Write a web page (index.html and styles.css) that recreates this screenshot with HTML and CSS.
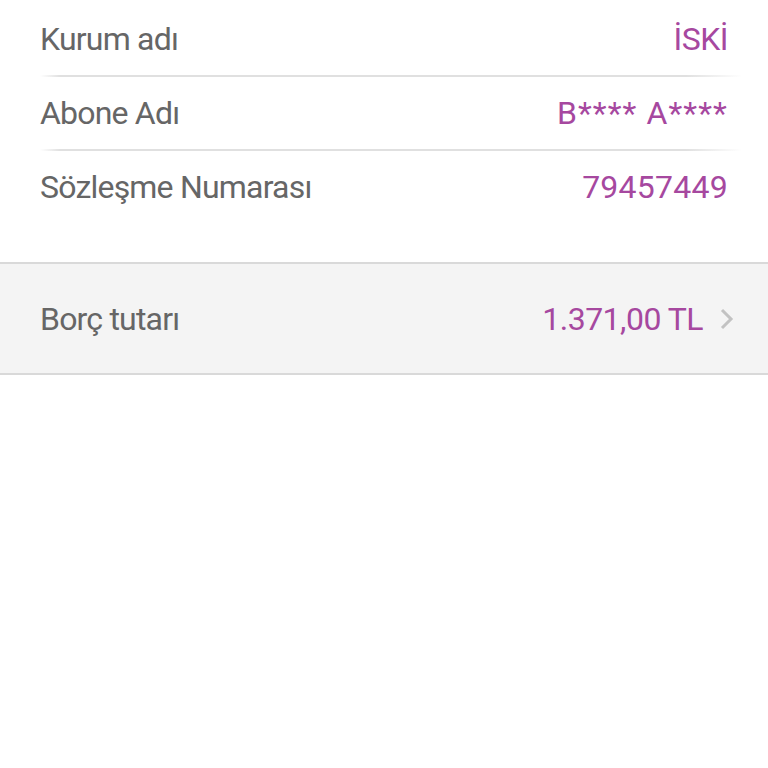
FILE: index.html
```html
<!DOCTYPE html>
<html lang="tr">
<head>
<meta charset="utf-8">
<link rel="stylesheet" href="styles.css">
</head>
<body>
<div class="info">
  <div class="row">
    <span class="label">Kurum adı</span>
    <span class="value">İSKİ</span>
  </div>
  <div class="row">
    <span class="label">Abone Adı</span>
    <span class="value masked">B**** A****</span>
  </div>
  <div class="row last">
    <span class="label">Sözleşme Numarası</span>
    <span class="value number">79457449</span>
  </div>
</div>
<div class="debt">
  <span class="label">Borç tutarı</span>
  <span class="amount">1.371,00 TL</span>
  <svg class="chev" width="16" height="24" viewBox="0 0 16 24"><path d="M3 3 L12 12 L3 21" fill="none" stroke="#c2c2c2" stroke-width="3"/></svg>
</div>
</body>
</html>
```
FILE: styles.css
```css
html, body {
  margin: 0;
  padding: 0;
  background: #ffffff;
}
body {
  font-family: Roboto, "DejaVu Sans", sans-serif;
  width: 768px;
  height: 768px;
  padding-top: 3px;
  box-sizing: border-box;
}
.info {
  margin-left: 40px;
}
.row {
  position: relative;
  height: 72px;
  display: flex;
  align-items: center;
  justify-content: space-between;
  padding-right: 40px;
  border-bottom: 2px solid transparent;
}
.row::after {
  content: "";
  position: absolute;
  left: 0;
  right: 26px;
  bottom: -2px;
  height: 2px;
  background: linear-gradient(to right, rgba(220,220,220,0) 0, #e0e0e0 20px, #e0e0e0 92%, rgba(220,220,220,0) 100%);
}
.row.last::after {
  display: none;
}
.label {
  font-size: 32px;
  color: #666666;
  letter-spacing: -0.8px;
}
.value {
  font-size: 32px;
  color: #a6489f;
  letter-spacing: -0.5px;
}
.value.masked {
  letter-spacing: 1.1px;
}
.value.number {
  letter-spacing: 0.25px;
}
.debt {
  margin-top: 37px;
  height: 109px;
  background: #f4f4f4;
  border-top: 2px solid #d9d9d9;
  border-bottom: 2px solid #d9d9d9;
  display: flex;
  align-items: center;
  padding: 0 33px 0 40px;
}
.debt .label {
  flex: 1;
}
.amount {
  font-size: 32px;
  color: #a6489f;
  letter-spacing: -0.5px;
  margin-right: 16px;
}
.chev {
  display: block;
}
```
